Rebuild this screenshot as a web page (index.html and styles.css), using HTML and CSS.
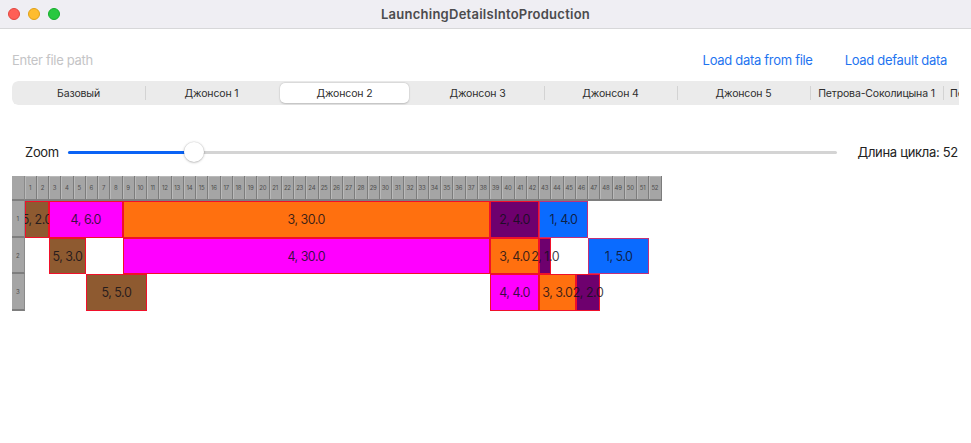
FILE: index.html
```html
<!DOCTYPE html>
<html lang="ru">
<head>
<meta charset="utf-8">
<title>LaunchingDetailsIntoProduction</title>
<link rel="stylesheet" href="styles.css">
</head>
<body>
<div class="window">
  <header class="titlebar">
    <div class="lights">
      <span class="light red"></span>
      <span class="light yellow"></span>
      <span class="light green"></span>
    </div>
    <div class="title">LaunchingDetailsIntoProduction</div>
  </header>

  <div class="toolbar">
    <div class="path">Enter file path</div>
    <div class="links">
      <span class="link">Load data from file</span>
      <span class="link">Load default data</span>
    </div>
  </div>

  <div class="segwrap">
    <div class="segmented">
      <div class="seg">Базовый</div>
      <div class="seg">Джонсон 1</div>
      <div class="seg selected">Джонсон 2</div>
      <div class="seg">Джонсон 3</div>
      <div class="seg">Джонсон 4</div>
      <div class="seg">Джонсон 5</div>
      <div class="seg">Петрова-Соколицына 1</div>
      <div class="seg">Петрова-Соколицына 2</div>
    </div>
  </div>

  <div class="zoomrow">
    <span class="zlabel">Zoom</span>
    <div class="slider">
      <div class="track"></div>
      <div class="fill"></div>
      <div class="knob"></div>
    </div>
    <span class="cycle">Длина цикла: 52</span>
  </div>

  <div class="gantt">
    <div class="corner"></div>
    <div class="hc">1</div><div class="hc">2</div><div class="hc">3</div><div class="hc">4</div><div class="hc">5</div><div class="hc">6</div><div class="hc">7</div><div class="hc">8</div><div class="hc">9</div><div class="hc">10</div>
    <div class="hc">11</div><div class="hc">12</div><div class="hc">13</div><div class="hc">14</div><div class="hc">15</div><div class="hc">16</div><div class="hc">17</div><div class="hc">18</div><div class="hc">19</div><div class="hc">20</div>
    <div class="hc">21</div><div class="hc">22</div><div class="hc">23</div><div class="hc">24</div><div class="hc">25</div><div class="hc">26</div><div class="hc">27</div><div class="hc">28</div><div class="hc">29</div><div class="hc">30</div>
    <div class="hc">31</div><div class="hc">32</div><div class="hc">33</div><div class="hc">34</div><div class="hc">35</div><div class="hc">36</div><div class="hc">37</div><div class="hc">38</div><div class="hc">39</div><div class="hc">40</div>
    <div class="hc">41</div><div class="hc">42</div><div class="hc">43</div><div class="hc">44</div><div class="hc">45</div><div class="hc">46</div><div class="hc">47</div><div class="hc">48</div><div class="hc">49</div><div class="hc">50</div>
    <div class="hc">51</div><div class="hc">52</div>

    <div class="blk brown" style="grid-row:2;grid-column:2 / span 2">5, 2.0</div>
    <div class="blk magenta" style="grid-row:2;grid-column:4 / span 6">4, 6.0</div>
    <div class="blk orange" style="grid-row:2;grid-column:10 / span 30">3, 30.0</div>
    <div class="blk purple" style="grid-row:2;grid-column:40 / span 4">2, 4.0</div>
    <div class="blk blue" style="grid-row:2;grid-column:44 / span 4">1, 4.0</div>

    <div class="blk brown" style="grid-row:3;grid-column:4 / span 3">5, 3.0</div>
    <div class="blk magenta" style="grid-row:3;grid-column:10 / span 30">4, 30.0</div>
    <div class="blk orange" style="grid-row:3;grid-column:40 / span 4">3, 4.0</div>
    <div class="blk purple" style="grid-row:3;grid-column:44 / span 1">2, 1.0</div>
    <div class="blk blue" style="grid-row:3;grid-column:48 / span 5">1, 5.0</div>

    <div class="blk brown" style="grid-row:4;grid-column:7 / span 5">5, 5.0</div>
    <div class="blk magenta" style="grid-row:4;grid-column:40 / span 4">4, 4.0</div>
    <div class="blk orange" style="grid-row:4;grid-column:44 / span 3">3, 3.0</div>
    <div class="blk purple" style="grid-row:4;grid-column:47 / span 2">2, 2.0</div>

    <div class="rh r1">1</div>
    <div class="rh r2">2</div>
    <div class="rh r3">3</div>
  </div>
</div>
</body>
</html>
```
FILE: styles.css
```css
* { box-sizing: border-box; }
html, body {
  margin: 0;
  padding: 0;
  background: #ffffff;
}
body {
  font-family: "Inter", "Liberation Sans", sans-serif;
  font-size: 13px;
  color: #222;
  overflow: hidden;
}
.window {
  width: 971px;
  height: 443px;
  overflow: hidden;
  background: #fff;
}
.titlebar {
  height: 29px;
  background: #efeef3;
  border-bottom: 1px solid #d7d7d9;
  display: flex;
  align-items: center;
}
.lights {
  display: flex;
  gap: 8px;
  padding-left: 8px;
}
.light {
  width: 12px;
  height: 12px;
  border-radius: 50%;
  display: block;
}
.light.red { background: #ff5f57; border: 0.5px solid #e2463f; }
.light.yellow { background: #febc2e; border: 0.5px solid #e1a116; }
.light.green { background: #28c840; border: 0.5px solid #14ae2a; }
.title {
  flex: 1;
  text-align: center;
  font-weight: 600;
  font-size: 13px;
  color: #4b4b4d;
  margin-right: 60px;
  letter-spacing: 0.25px;
}

.toolbar {
  display: flex;
  align-items: center;
  justify-content: space-between;
  height: 22px;
  margin-top: 20px;
  padding: 0 24px 0 12px;
  letter-spacing: -0.3px;
}
.path {
  color: #c4c4c6;
  font-size: 13px;
}
.links {
  display: flex;
  gap: 32px;
}
.link {
  color: #1f74f0;
  font-size: 13px;
}

.segwrap {
  margin: 10px 0 0 12px;
  width: 947px;
  height: 24px;
  overflow: hidden;
  border-radius: 6px 0 0 6px;
}
.segmented {
  display: flex;
  height: 24px;
  background: #ebebeb;
  border-radius: 6px;
  width: max-content;
}
.seg {
  width: 133px;
  flex: none;
  height: 24px;
  display: flex;
  align-items: center;
  justify-content: center;
  font-size: 10.5px;
  letter-spacing: -0.15px;
  color: #2e2e2e;
  position: relative;
}
.seg + .seg::before {
  content: "";
  position: absolute;
  left: 0;
  top: 5px;
  height: 14px;
  width: 1px;
  background: #d3d3d3;
}
.seg.selected::before,
.seg.selected + .seg::before { display: none; }
.seg.selected {
  background: #fff;
  margin: 2px;
  width: 129px;
  height: 20px;
  border-radius: 5px;
  box-shadow: 0 0.5px 2px rgba(0,0,0,0.18), 0 0 0 0.5px rgba(0,0,0,0.05);
}
.seg.last {
  justify-content: flex-start;
}

.zoomrow {
  display: flex;
  align-items: center;
  height: 24px;
  margin-top: 35px;
  padding: 0 13px 0 25px;
  letter-spacing: -0.3px;
}
.zlabel {
  font-size: 13px;
  color: #222;
}
.slider {
  flex: 1;
  margin: 0 21px 0 9px;
  height: 24px;
  position: relative;
}
.track {
  position: absolute;
  left: 0;
  right: 0;
  top: 11px;
  height: 3px;
  border-radius: 2px;
  background: #d4d4d4;
}
.fill {
  position: absolute;
  left: 0;
  width: 120px;
  top: 11px;
  height: 3px;
  border-radius: 2px;
  background: #0a63f5;
}
.knob {
  position: absolute;
  left: 116px;
  top: 2px;
  width: 20px;
  height: 20px;
  border-radius: 50%;
  background: #fff;
  box-shadow: 0 0.5px 2.5px rgba(0,0,0,0.3), 0 0 0 0.5px rgba(0,0,0,0.06);
}
.cycle {
  font-size: 13px;
  color: #222;
}

.gantt {
  margin: 12px 0 0 12px;
  display: grid;
  grid-template-columns: 12.5px repeat(52, 12.25px);
  grid-template-rows: 25px repeat(3, 36.7px);
}
.corner {
  grid-row: 1;
  grid-column: 1;
  background: #a5a5a5;
  border-bottom: 2px solid #7e7e7e;
  border-right: 1px solid #8a8a8a;
}
.hc {
  grid-row: 1;
  background: #a5a5a5;
  border-right: 1px solid #7c7c7c;
  border-bottom: 2px solid #7e7e7e;
  box-shadow: inset 1px 1px 0 #b9b9b9;
  font-size: 6px;
  color: #4e4e4e;
  display: flex;
  align-items: center;
  justify-content: center;
  overflow: hidden;
  letter-spacing: -0.2px;
}
.rh {
  grid-column: 1;
  z-index: 1;
  background: #a5a5a5;
  border-right: 1px solid #8a8a8a;
  border-bottom: 2px solid #7e7e7e;
  font-size: 6px;
  color: #4e4e4e;
  display: flex;
  align-items: center;
  justify-content: center;
}
.r1 { grid-row: 2; }
.r2 { grid-row: 3; }
.r3 { grid-row: 4; }
.blk {
  display: flex;
  align-items: center;
  justify-content: center;
  white-space: nowrap;
  font-size: 12.5px;
  letter-spacing: -0.5px;
  color: rgba(15, 15, 25, 0.82);
  border: 1px solid #f0102a;
  min-width: 0;
}
.brown { background: #8e5a30; }
.magenta { background: #ff00ff; }
.orange { background: #ff700f; }
.purple { background: #6e006e; }
.blue { background: #0a6bff; border-color: #c0307a; }
```
